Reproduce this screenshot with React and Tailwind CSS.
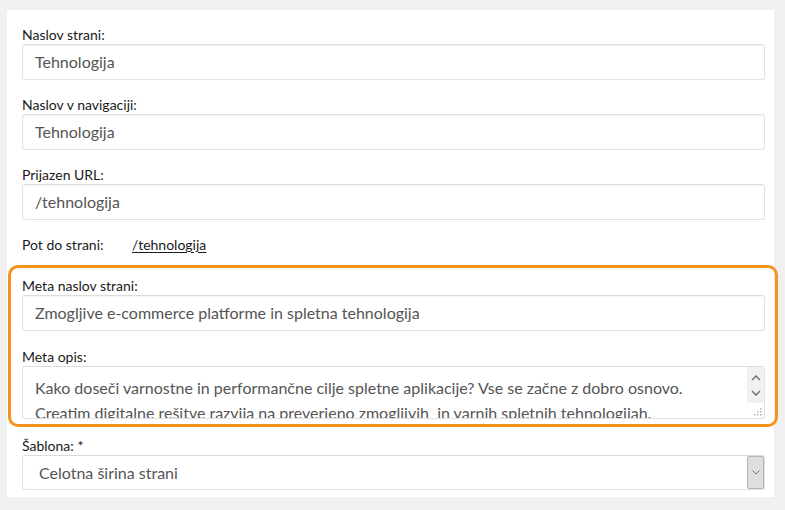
import React from "react";

const font = { fontFamily: "Lato, 'Open Sans', sans-serif" };

function Label({ children }) {
  return (
    <div className="h-[18px] flex items-center text-[14px] text-[#1a1a1a] leading-none">
      {children}
    </div>
  );
}

function Input({ value }) {
  return (
    <div className="h-[36px] flex items-center px-[12px] border border-[#e2e2e2] border-t-[#dcdcdc] rounded-[3px] bg-white text-[16px] text-[#555] shadow-[inset_0_1px_1px_rgba(0,0,0,0.04)]">
      {value}
    </div>
  );
}

function Chevron({ up, className }) {
  return (
    <svg width="10" height="6" viewBox="0 0 10 6" className={className}>
      <path
        d={up ? "M1 5 L5 1 L9 5" : "M1 1 L5 5 L9 1"}
        fill="none"
        stroke="currentColor"
        strokeWidth="1.4"
      />
    </svg>
  );
}

export default function App() {
  return (
    <div className="w-[785px] h-[510px] bg-[#f0f0f0] pt-[10px] pl-[7px]" style={font}>
      <div className="w-[767px] h-[487px] bg-white pt-[16px] pl-[15px] pr-[9px]">
        <div className="flex flex-col">
          <Label>Naslov strani:</Label>
          <Input value="Tehnologija" />
          <div className="h-[16px]" />
          <Label>Naslov v navigaciji:</Label>
          <Input value="Tehnologija" />
          <div className="h-[16px]" />
          <Label>Prijazen URL:</Label>
          <Input value="/tehnologija" />
          <div className="h-[16px] " />
          <div className="h-[18px] flex items-center text-[14px] text-[#1a1a1a] leading-none">
            <span className="w-[110px]">Pot do strani:</span>
            <span className="underline underline-offset-2">/tehnologija</span>
          </div>
          <div className="h-[23px]" />
          <div className="relative">
            <div className="absolute left-[-14px] top-[-12px] right-[-13px] bottom-[-8px] border-[3px] border-[#f5931f] rounded-[10px] pointer-events-none" />
            <Label>Meta naslov strani:</Label>
            <Input value="Zmogljive e-commerce platforme in spletna tehnologija" />
            <div className="h-[17px]" />
            <Label>Meta opis:</Label>
            <div className="relative h-[53px] border border-[#e2e2e2] border-t-[#dcdcdc] rounded-[3px] bg-white overflow-hidden">
              <div className="pl-[12px] pr-[20px] pt-[8px] text-[16px] leading-[25px] text-[#555] whitespace-nowrap">
                <div>Kako doseči varnostne in performančne cilje spletne aplikacije? Vse se začne z dobro osnovo.</div>
                <div>Creatim digitalne rešitve razvija na preverjeno zmogljivih&nbsp; in varnih spletnih tehnologijah.</div>
              </div>
              <div className="absolute right-0 top-0 w-[17px] h-[36px] bg-[#f1f1f1] flex flex-col items-center justify-center gap-[9px] text-[#6b6b6b]">
                <Chevron up />
                <Chevron />
              </div>
              <svg className="absolute right-[2px] bottom-[2px]" width="8" height="8" viewBox="0 0 8 8">
                <g fill="#b5b5b5">
                  <rect x="6" y="0" width="1.5" height="1.5" />
                  <rect x="3" y="3" width="1.5" height="1.5" />
                  <rect x="6" y="3" width="1.5" height="1.5" />
                  <rect x="0" y="6" width="1.5" height="1.5" />
                  <rect x="3" y="6" width="1.5" height="1.5" />
                  <rect x="6" y="6" width="1.5" height="1.5" />
                </g>
              </svg>
            </div>
          </div>
          <div className="h-[18px]" />
          <Label>Šablona: *</Label>
          <div className="h-[35px] flex items-stretch border border-[#e2e2e2] border-t-[#dcdcdc] rounded-[3px] bg-white">
            <div className="flex-1 flex items-center pl-[16px] text-[16px] text-[#555]">
              Celotna širina strani
            </div>
            <div className="w-[17px] bg-[#dedede] border border-[#b4b4b4] rounded-[2px] flex items-center justify-center text-[#777]">
              <svg width="8" height="5" viewBox="0 0 8 5">
                <path d="M0.5 0.5 L4 4 L7.5 0.5" fill="none" stroke="currentColor" strokeWidth="1" />
              </svg>
            </div>
          </div>
        </div>
      </div>
    </div>
  );
}
